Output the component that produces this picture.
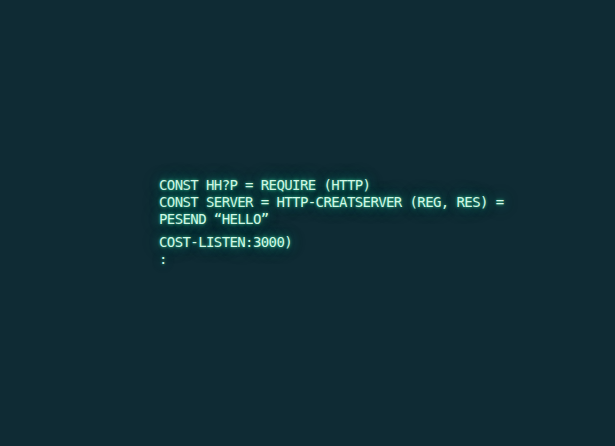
const lines = [
  'CONST HH?P = REQUIRE (HTTP)',
  'CONST SERVER = HTTP-CREATSERVER (REG, RES) =',
  'PESEND “HELLO”',
];

export default function App() {
  return (
    <div className="w-[615px] h-[446px] bg-[#0f2b34] overflow-hidden">
      <div
        className="pt-[177px] pl-[159px] text-[14px] leading-[17px] tracking-[-0.6px] text-[#d2f7e6] [text-shadow:0_0_3px_rgba(52,211,153,0.9),0_0_10px_rgba(45,190,150,0.6),0_0_22px_rgba(40,170,140,0.45)]"
        style={{ fontFamily: '"DejaVu Sans Mono", monospace' }}
      >
        {lines.map((l) => (
          <div key={l} className="whitespace-pre">{l}</div>
        ))}
        <div className="mt-[6px] whitespace-pre">COST-LISTEN:3000)</div>
        <div className="whitespace-pre">:</div>
      </div>
    </div>
  );
}
